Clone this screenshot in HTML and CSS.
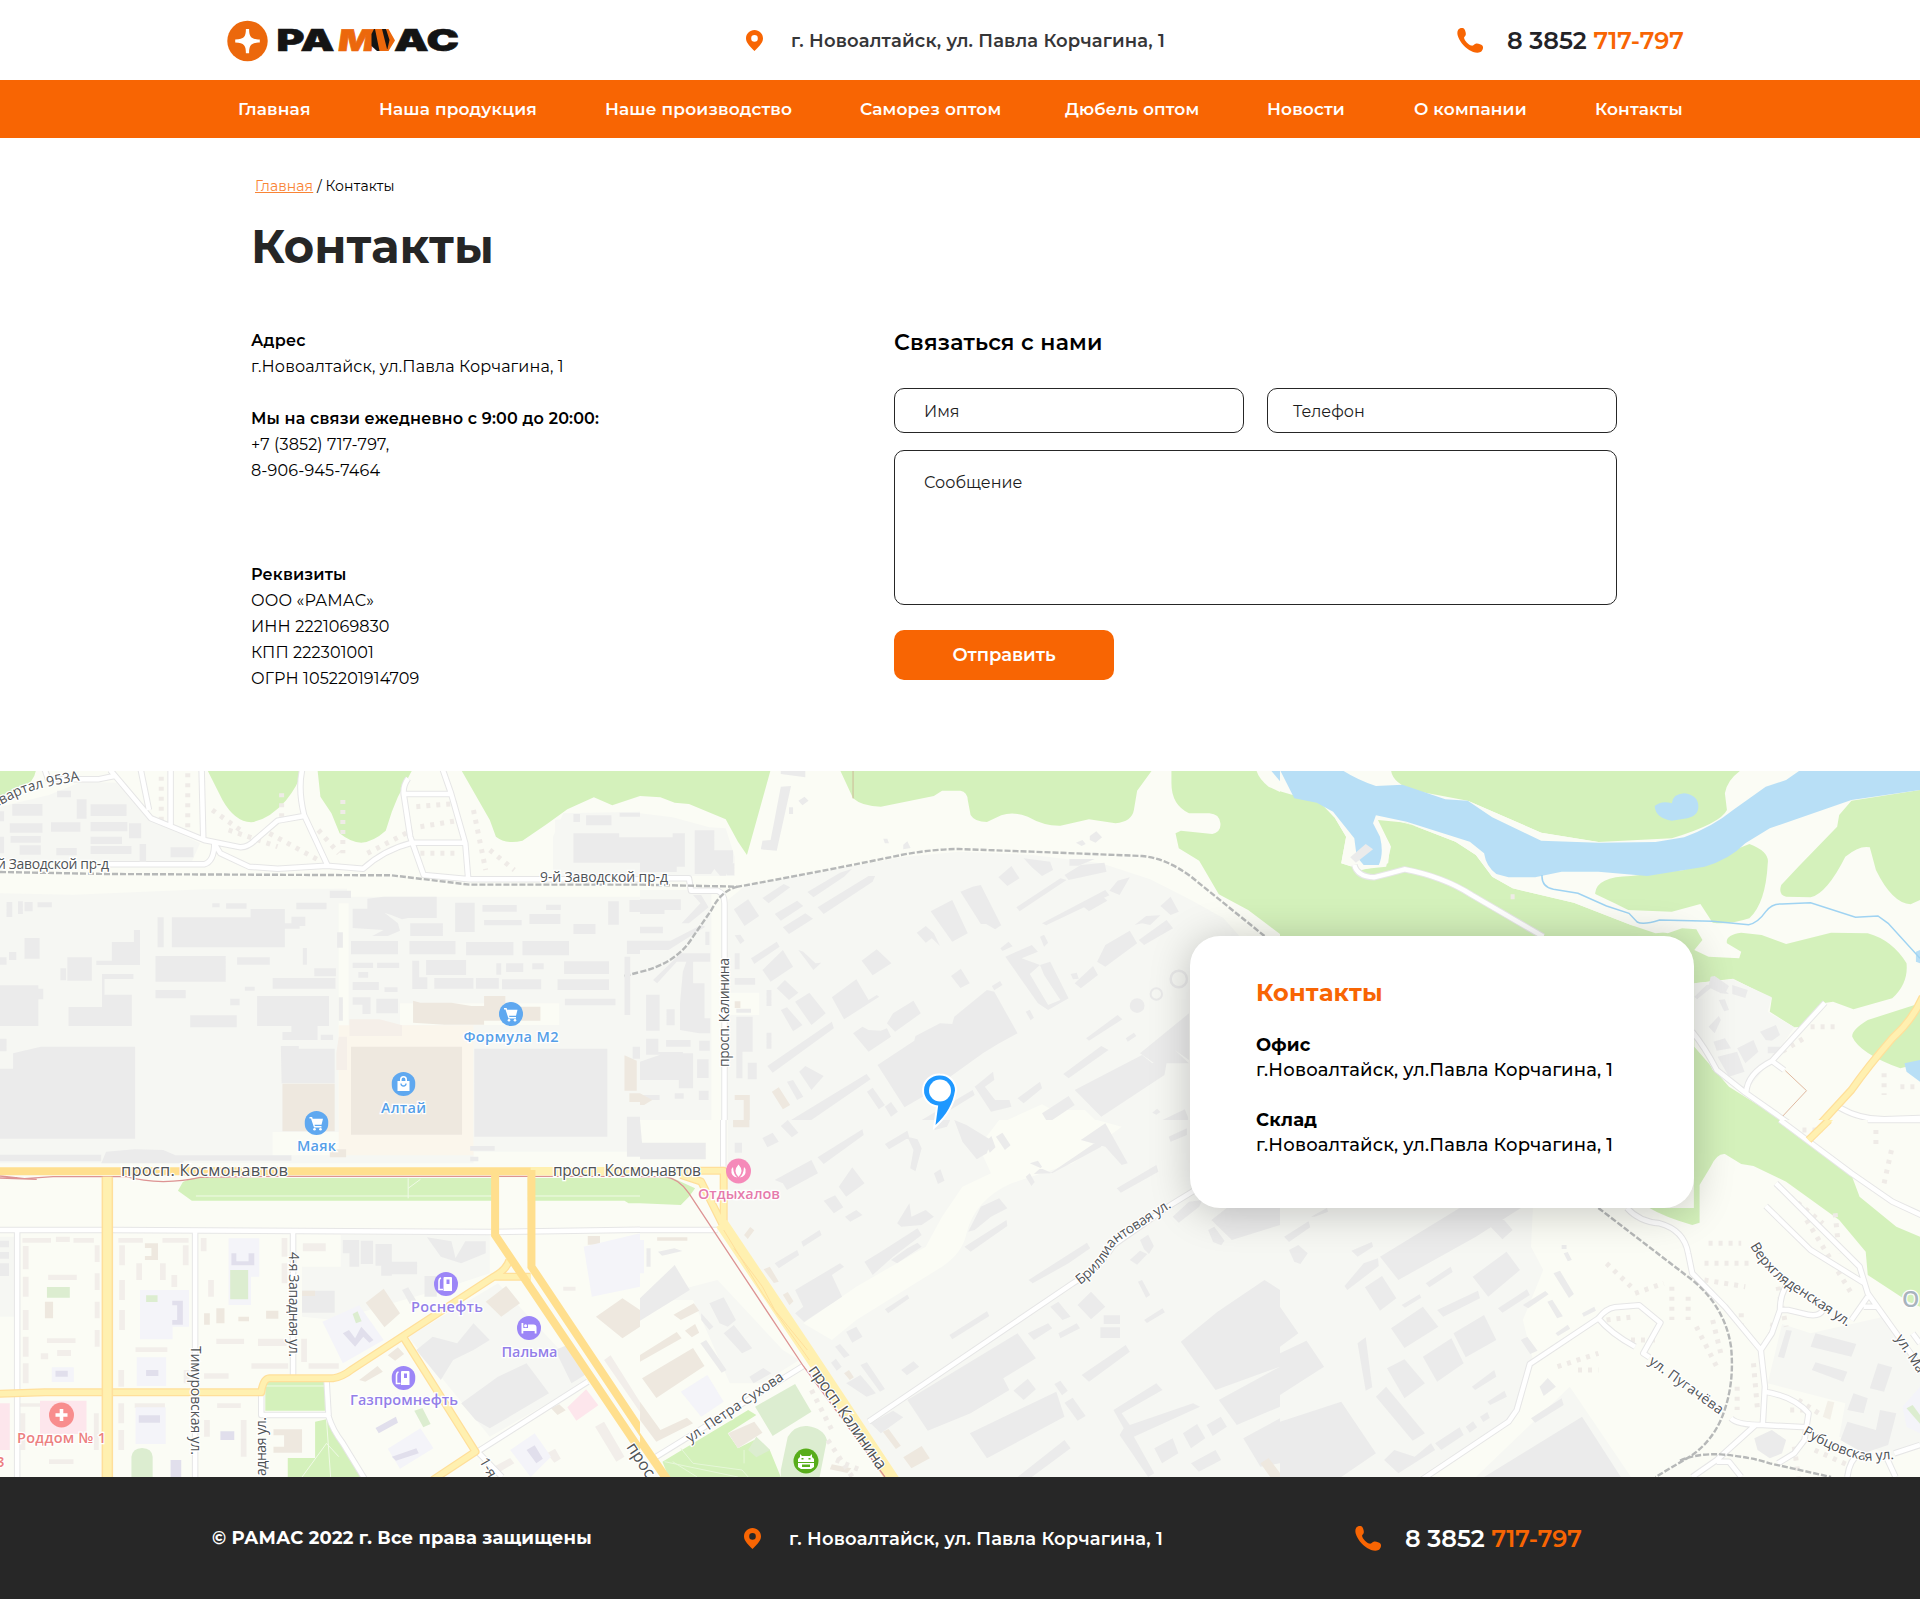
FILE: index.html
```html
<!DOCTYPE html>
<html lang="ru">
<head>
<meta charset="utf-8">
<title>Контакты — РАМАС</title>
<link rel="stylesheet" href="styles.css">
</head>
<body>
<svg class="sprite" width="0" height="0">
  <symbol id="i-pin" viewBox="0 0 17 21"><path fill-rule="evenodd" d="M8.5 0C3.8 0 0 3.7 0 8.4 0 13 5.2 17.400 8.500 21 11.800 17.400 17 13 17 8.400 17 3.700 13.200 0 8.500 0Zm0 5.100a3.300 3.300 0 1 1 0 6.600 3.300 3.300 0 0 1 0-6.600Z"/></symbol>
  <symbol id="i-phone" viewBox="0 0 26 25"><path d="M1.200 1.800C2.700-.4 6.500-.6 7.600 1.500c.9 1.700 1.500 3.900 1.100 5.400-.3 1.300-1.800 1.700-1.600 3 .4 2.600 4.300 6.700 7.300 7.700 1.700.5 2.500-1.300 4.200-1.900 2-.7 5.400.5 6.700 1.900 1.600 1.800.3 5.200-1.900 6.500-3 1.700-7.800.2-11.300-2.100C6.600 18.300 2.300 13.200.700 7.600.200 5.800.100 3.400 1.200 1.800Z"/></symbol>
  <symbol id="m-cart" viewBox="-12 -12 24 24"><circle r="12" fill="#5fa8f0"/><path fill="#fff" d="M-7-6h2.600l.6 1.800H6.500L5 1.800h-7l.4 1.300H5v1.500h-7.500L-5.500-4.500H-7Z"/><circle cx="-2" cy="6.300" r="1.300" fill="#fff"/><circle cx="4" cy="6.300" r="1.300" fill="#fff"/></symbol>
  <symbol id="m-bag" viewBox="-12 -12 24 24"><circle r="12" fill="#5fa8f0"/><path d="M-6-3H6V7H-6Z" fill="#fff"/><path d="M-2.700-3v-1.500a2.700 2.700 0 0 1 5.400 0V-3" fill="none" stroke="#fff" stroke-width="1.600"/><path d="M-2.500-.5a2.500 2.500 0 0 0 5 0" fill="none" stroke="#5fa8f0" stroke-width="1.300"/></symbol>
  <symbol id="m-fuel" viewBox="-12 -12 24 24"><circle r="12" fill="#9c86f7"/><path fill-rule="evenodd" fill="#fff" d="M-1.500-7H5Q6-7 6-6V7H-2.500V-6Q-2.500-7-1.500-7ZM.500-4.500V0h3v-4.500Z"/><path d="M-3 5.500H-7V-2.500q0-3 2-3.500" fill="none" stroke="#fff" stroke-width="1.600"/></symbol>
  <symbol id="m-bed" viewBox="-12 -12 24 24"><circle r="12" fill="#9c86f7"/><path fill="#fff" d="M-7.500-5h1.800v5H-1v-3.500h5.500Q7.500-3.500 7.500-.5V5.500H5.700V3h-11.400v2.500h-1.800Z"/><circle cx="-3.400" cy="-2.200" r="1.500" fill="#fff"/></symbol>
</svg>

<header class="topbar">
  <a class="logo" href="#" aria-label="РАМАС">
    <svg width="236" height="44" viewBox="224 18 236 44">
      <circle cx="247.500" cy="41" r="20.200" fill="#ec680c"/>
      <path fill="#fff" d="M245.900 28.900h3.200c0 7 1.400 10.500 10.700 10.500v3c-9.300 0-10.700 3.500-10.700 10.800h-3.200c0-7.300-1.400-10.800-10.700-10.800v-3c9.300 0 10.700-3.500 10.700-10.500Z"/>
      <text class="logo__text" x="276.500" y="51" textLength="58" lengthAdjust="spacingAndGlyphs">РА</text>
      <text class="logo__text logo__text--accent" transform="translate(337 51) skewX(-8)" textLength="36" lengthAdjust="spacingAndGlyphs">М</text>
      <path fill="#141414" d="M371.500 34L374 29H386L390 34V47L386 51H377L371.500 46Z"/>
      <path fill="#ec680c" d="M375 29H382L387.500 51H379.500ZM386 29H388.500L395 40.500 388.500 51H387L389.500 40Z"/>
      <text class="logo__text" x="394" y="51" textLength="65" lengthAdjust="spacingAndGlyphs">АС</text>
    </svg>
  </a>
  <div class="place"><svg class="ico-pin"><use href="#i-pin"/></svg><span>г. Новоалтайск, ул. Павла Корчагина, 1</span></div>
  <a class="tel" href="#"><svg class="ico-phone"><use href="#i-phone"/></svg><span>8 3852 <b>717-797</b></span></a>
</header>

<nav class="menu">
  <a href="#">Главная</a><a href="#">Наша продукция</a><a href="#">Наше производство</a><a href="#">Саморез оптом</a><a href="#">Дюбель оптом</a><a href="#">Новости</a><a href="#">О компании</a><a href="#">Контакты</a>
</nav>

<main class="page">
  <div class="crumbs"><a href="#">Главная</a> / Контакты</div>
  <h1 class="title">Контакты</h1>
  <div class="cols">
    <div class="info">
      <section>
        <h2>Адрес</h2>
        <p>г.Новоалтайск, ул.Павла Корчагина, 1</p>
      </section>
      <section>
        <h2>Мы на связи ежедневно с 9:00 до 20:00:</h2>
        <p>+7 (3852) 717-797,</p>
        <p>8-906-945-7464</p>
      </section>
      <section class="info__legal">
        <h2>Реквизиты</h2>
        <p>ООО «РАМАС»</p>
        <p>ИНН 2221069830</p>
        <p>КПП 222301001</p>
        <p>ОГРН 1052201914709</p>
      </section>
    </div>
    <form class="form">
      <h2>Связаться с нами</h2>
      <div class="form__row"><label class="field">Имя</label><label class="field field--tel">Телефон</label></div>
      <label class="field field--area">Сообщение</label>
      <button class="btn" type="button">Отправить</button>
    </form>
  </div>
</main>

<section class="mapwrap">
<svg class="map" viewBox="0 771 1920 706">
  <defs>
    <path id="lp1" d="M-5 808L18 796Q38 787 84 780"/>
    <path id="lp2" d="M1080 1285Q1100 1270 1108 1256 1114 1243 1124 1238L1178 1203"/>
    <path id="lp3" d="M1750 1246Q1768 1278 1800 1295L1852 1330"/>
    <path id="lp4" d="M1802 1434Q1840 1457 1868 1461L1905 1458"/>
  </defs>
  <rect y="770" width="1920" height="708" fill="#fbfcf5"/>

  <!-- north-west -->
  <svg x="0" y="770" width="640" height="350" viewBox="0 0 1568 1050" preserveAspectRatio="none">
    <path class="ind" d="M0 110L120 75 200 35 285 38 370 150 490 220 470 275H0ZM0 370L180 374 500 358 850 356V380H1568V1050H0ZM1355 200L1380 130 1568 125V330H1355Z"/>
    <path class="ind" d="M1568 125V330H1360V150Z"/>
    <path class="land" d="M830 400H854V1050H830ZM980 700H1370V765H980Z"/>
    <path class="green" d="M0 0H88Q85 35 50 60 25 76 0 78ZM508 0L545 90Q575 155 615 157 660 148 700 92 732 45 740 0ZM778 0L785 80 812 130 832 190Q860 218 885 218 915 215 945 182L960 125 975 80 1010 0ZM1130 0L1200 150 1215 200Q1240 224 1280 212L1340 162 1390 118 1455 82 1500 106 1568 78V0Z"/>
    <path class="tiny" d="M395 20V150M460 10V180M520 120L600 190M690 70V140M660 190L780 270M780 180L830 250M840 90V250M900 250L1010 180M1020 110L1120 100M1030 250L1120 250M1160 120L1190 300M1200 240L1260 300M1030 170L1130 150M560 180L680 230"/>
    <g id="ra">
      <path d="M110 0L118 28H240L280 18M270 0L370 145 500 210 590 232Q610 230 625 210L680 152 745 138M345 0L365 120M418 0V170M494 0L498 205M740 0Q730 60 745 135L802 285M250 283H500Q525 275 525 220L540 250 610 290 680 296 800 287 890 296Q940 240 1010 218H1140M1000 25Q985 50 990 80L1005 200 1038 315 1150 328H1568M1085 0L1105 70 1140 220 1147 325M990 72H1105"/>
    </g>
    <use href="#ra" class="case"/><use href="#ra" class="road"/>
    <path class="rail" d="M0 306L260 312 960 316 1150 344H1568M1530 618L1568 606"/>
    <path class="bld" d="M30 102h74v35h-74ZM24 160h80v28h-80ZM26 198h74v20h-74ZM48 226h52v28h-52ZM125 157h72v28h-72ZM188 88h24v58h-24ZM222 103h88v35h-88ZM222 156h90v28h-90ZM222 200h77v22h-77ZM222 228h100v24h-100ZM316 160h30v45h-30ZM342 222h16v54h-16ZM140 62h34v20h-34ZM138 234h50v22h-50ZM0 124h10v30h-10ZM0 200h10v50h-10ZM418 232h56v30h-56Z
      M16 396h14v45h-14ZM44 394h12v38h-12ZM60 396h20v28h-20ZM92 397h35v15h-35ZM520 400h18v12h-18ZM554 400h50v16h-50ZM726 398h74v20h-74ZM808 362h52v22h-52ZM386 442h15v90h-15ZM421 442H614V417H698V532H421ZM714 440h34v28h-34ZM698 460h36v16h-36ZM60 504h37v62h-37ZM274 516H328V480H343V585H236V572H274ZM165 562H225V632H165ZM148 595h14v36h-14ZM250 612H327V627H256V674H323V768H168V711H250ZM381 558h172v77h-172ZM381 660h74v25h-74ZM581 562h80v22h-80ZM742 534h10v50h-10ZM770 595h53v24h-53ZM668 624h154v32h-154ZM600 650h24v12h-24ZM564 686h23v20h-23ZM630 678h176v90h-28v42h-86v-24h22v-18h-84ZM786 794h30v16h-30ZM826 487h14v46h-14ZM830 682h10v70h-10ZM466 736h114v36h-114ZM0 646h94v10h12v32h-12v80h-94ZM0 806h16v38h-16ZM22 546h18v24h-18ZM0 562h16v22h-16Z
      M1405 190h112v12h51v76h-163ZM1436 136h62v30h-62ZM1405 132h16v24h-16ZM1518 128h50v12h-50ZM864 416H900V386L940 380H1070V444H1000L985 448 960 436 942 428 975 460 980 482 950 498H912L940 480 864 474ZM1005 460h80v38h-80ZM1115 398h48v88h-48ZM1182 405h84v20h-84ZM1186 450h92v16h-92ZM1297 432h76v30h-76ZM1338 404h36v16h-36ZM1405 462h54v30h-54ZM1490 394h26v70h-26ZM1542 390h26v36h-26ZM860 513h115v40h-115ZM1003 513h113v40h-113ZM1142 516h116v40h-116ZM1280 513h114v43h-114ZM1536 512h32v40h-32ZM864 578h50v16h-50ZM924 578h54v16h-54ZM878 606h24v17h-24ZM864 636h64v24h-64ZM942 652h32v14h-32ZM1010 572h17v50h20v35h-37ZM1044 570h98v45h-98ZM1064 624h96v32h-96ZM1166 624h56v32h-56ZM1230 628h96v30h-96ZM1366 628h126v32h-126ZM1382 574h110v38h-110ZM1240 580h42v26h-42ZM1304 580h28v18h-28ZM1216 580h12v34h-12ZM1384 686h124v20h-124ZM864 682h44v50h-20v-28h-24ZM922 686h53v44h-53ZM1530 560h14v175h-14ZM688 828h44v8h88v104h-130ZM32 850l68-20h231v220h-331v-154h32ZM1162 836h326v214h-326ZM1550 830h18v36h-18ZM1536 1040h32v10h-32Z"/>
    <path class="shop" d="M830 766H1160V1050H830Z"/>
    <path class="beige" d="M1012 692L1030 698H1106L1155 708H1186V678H1238V710H1324V752H1186V764H1090L1012 758ZM860 830H1132V1050H860ZM692 941H820V1050H692ZM1530 856l30 16v90h-30ZM1542 970h26v26h-26Z"/>
    <path fill="#f5efe9" d="M856 748H930L985 766V798H856ZM830 800H850V900H824V850Z"/>
  </svg>

  <!-- north -->
  <svg x="640" y="770" width="640" height="350" viewBox="0 0 1568 1050" preserveAspectRatio="none">
    <path class="ind" d="M0 130L80 142 170 172 210 175 232 260V318H0ZM0 360H175V1050H0ZM215 390L260 345 640 262 780 245 960 255 1130 280 1250 328 1350 390 1430 445 1470 500H1568V1050H215Z"/>
    <path class="land" d="M215 668H292V735H215ZM900 1050L985 1003 1010 1020 1090 1020 1115 1050Z"/>
    <path class="green" d="M0 0H320L262 255 240 215 210 148 120 102 85 98 50 82 0 78ZM490 0L522 85Q545 110 590 110L720 78 740 62H785Q802 66 803 90L810 135Q820 156 850 156L885 136Q915 124 950 140 990 168 1030 167L1100 148 1165 160Q1205 155 1210 120L1218 62 1255 0ZM1302 0H1568V492L1490 420 1418 373 1370 272 1320 235 1312 190 1325 182 1402 192Q1424 185 1422 160 1420 132 1395 130H1345Q1302 105 1302 40Z"/>
    <path class="land" d="M1510 0H1568V66L1540 50Q1515 25 1510 0Z"/>
    <path class="water" d="M1545 0H1568V34Z"/>
    <path d="M522 0V85" stroke="#cdbb97" stroke-width="1" fill="none"/>
    <path class="bld" d="M345 50L370 48 335 242 296 238 300 212 320 210ZM345 0H405V22L345 12ZM388 92l15-12 10 12-15 14ZM1102 198l16-14 14 18-16 16-14-8ZM1068 218l16-8 8 12-10 6ZM645 224l10-10 8 20-18 4ZM596 206l10 0 4 14-10 0ZM365 112h10v20h-10ZM0 202H80V190H110V290H90V306H0ZM134 181h48v60h46v36l-18 40h-14l-14 -20 -8 15h-40ZM213 280h18v36h-18Z
      M230 418L265 388 292 438 256 468ZM300 384L352 342 368 352 315 400ZM410 366L490 308 520 296 500 320 425 382ZM435 412L560 318 576 318 570 335 450 432ZM330 432L385 392 400 408 345 452ZM350 472L405 430 424 446 365 492ZM712 424L765 390 803 490 765 515ZM785 365L815 350 835 345 885 466 870 478 848 462 835 462ZM678 488L700 468 720 490 735 528 715 505 700 518ZM878 322L910 288 930 325 900 348ZM940 265L1005 275 1012 300 985 318 960 292ZM1040 315L1080 285 1138 278 1143 305 1050 330ZM1052 267h62l-40 20h-22ZM922 412L1030 325 1045 330 930 424ZM985 460L1140 360 1150 376 995 466ZM1088 412L1130 376 1145 392 1100 424ZM1150 362L1170 332 1200 322 1175 375ZM1275 408L1300 380 1320 425 1300 435ZM1212 465L1240 438 1275 436 1250 465 1230 460ZM1222 510L1290 450 1306 475 1235 525ZM1120 575L1140 525 1200 482 1218 520 1140 590ZM543 572L580 538 616 580 570 616ZM762 618L786 596 808 640 785 654ZM470 682L530 628 560 690 580 675 586 680 500 748ZM582 885L672 812 675 798 735 760 765 762 770 740 850 660 868 665 925 790 880 820 840 850 760 920 700 975 648 1012ZM605 760L620 730 670 692 688 730 625 785ZM522 790L545 770 560 780 590 782 605 775 615 800 560 845ZM272 565L335 515 342 530 280 582ZM300 600L350 540 375 590 320 635ZM388 540L400 545 430 580 444 578 425 600ZM335 655L355 630 388 668 365 690ZM380 695L415 668 455 730 420 765ZM345 720L360 712 398 765 375 784ZM312 888L470 755 475 775 325 908ZM370 1050L555 912 565 928 420 1050ZM390 905L405 888 450 918 420 960ZM360 935L375 930 400 980 385 990ZM556 965L570 953 600 1005 585 1018ZM600 1010L615 996 632 1025 615 1040ZM895 560L960 525 975 545 935 565 980 585 955 612 1000 705 1030 690 990 615 980 585 1005 575 1050 685 1000 720 975 700ZM883 535l20-20 10 14-25 14ZM980 500l10-6 10 24-10 12ZM1065 640L1110 588 1122 615 1080 655ZM1055 612l15-4 5 18-14 2ZM862 648l20-15 6 12-20 16ZM945 725l10-6 10 24-8 8ZM1093 805L1170 735 1182 748 1100 812ZM1037 912L1130 828 1148 840 1050 925ZM1065 960L1230 855 1255 880 1275 850 1310 840 1345 880H1290L1285 915 1130 1040ZM1190 805L1210 788 1216 798 1195 815ZM1225 850L1345 730V870L1310 840 1275 850 1260 880ZM820 950L865 905 868 930 845 950 870 990 905 990 910 1010 860 1025ZM925 985L980 935 985 955 940 1000ZM985 1030L1050 978 1065 1005 1010 1050H995ZM1255 1028l12-12 8 10-10 8ZM1280 1050l55-32 8 25v7ZM690 1050l125-90 5 15-100 75Z
      M0 388H100V420H60V432H0ZM102 460L148 400 130 375H150L168 412 120 460ZM0 470h56v20h-56ZM0 512H75L150 465 160 470 70 540H0ZM32 630L100 550H172V575H90L42 640ZM160 485h10v40h-10ZM105 605L115 570H130V640H158V745H172V790H145L98 780V700ZM15 674h33v108h-33ZM65 718h20v48h-20ZM15 806h30v40h60v8h-90ZM64 810h60v20h-60ZM145 812h26v30h-26ZM0 875L60 850H130V955H95V930H0ZM140 868h28v56h-28ZM8 975h40v15h-40ZM85 970h22v16h-22ZM144 962h24v28h-24ZM232 550h12v48h-12ZM232 624h50v20h-50ZM232 496l14-2 10 18-10 10ZM236 740h40v105h-25v80h-15ZM264 878h22v50h-22ZM310 660h12v48h-12ZM310 788h12v48h-12ZM236 716h36v12h-36Z"/>
    <ellipse cx="1218" cy="707" rx="18" ry="22" class="bld"/>
    <ellipse cx="1265" cy="672" rx="14" ry="17" fill="none" stroke="#e9e9e9" stroke-width="2"/>
    <ellipse cx="1320" cy="627" rx="20" ry="25" fill="none" stroke="#e9e9e9" stroke-width="2.500"/>
    <path class="beige" d="M232 694h14v20h-14ZM323 965L340 952 368 1005 350 1018ZM232 975H269V1072H228V1052H254V990H232ZM0 970l30 20-20 15-10 0Z"/>
    <g id="rb"><path d="M60 325H120L125 362H190Q207 370 207 400V1060"/></g>
    <use href="#rb" class="case"/><use href="#rb" class="road"/>
    <path class="rail" d="M0 344L240 350Q480 296 640 255 710 238 780 237L960 245 1230 258Q1290 265 1350 320L1530 498M240 350Q200 360 175 420L130 500Q90 580 0 606"/>
  </svg>

  <!-- north-east -->
  <svg x="1280" y="770" width="640" height="350" viewBox="0 0 1568 1050" preserveAspectRatio="none">
    <path class="green" d="M0 64L100 100 135 145 162 200 150 280 200 300 235 290 265 280 270 225 240 150 310 158 430 215 480 255 520 320 570 355 720 398 860 465 950 490 985 475 1020 478 1035 510 1015 540 1050 560 1125 565 1130 545 1095 520Q1090 495 1130 488L1180 495 1240 522 1350 488 1440 490Q1500 510 1535 580 1540 640 1500 685L1405 718 1355 695 1330 700 1285 770 1260 772 1200 725 1205 685 1110 626 1015 640V830L1100 950 1230 1050H0ZM272 0Q275 40 330 62L460 92 640 188 780 216 960 205Q1080 160 1095 120L1090 70Q1095 30 1130 0ZM1568 60L1400 92 1370 135 1365 170 1270 290 1228 345Q1220 375 1240 380L1300 382Q1340 370 1385 260 1420 225 1445 232L1460 300Q1500 400 1545 403L1568 390ZM1150 222Q1200 245 1195 280 1190 400 1150 445 1100 465 1060 458L1030 402 960 425 850 420Q775 400 772 370 775 320 860 318L990 300ZM1568 700L1440 750Q1400 780 1402 800 1420 850 1520 895L1568 880Z"/>
    <path class="ind" d="M1015 640L1110 628 1205 682 1195 725 1260 772 1205 870 1140 965 1060 900 1015 790Z"/>
    <path class="land" d="M135 145L162 200 150 280 200 298 260 290 272 230 235 150 240 135 180 130ZM240 138L310 158 430 215 480 255 520 320 570 355 720 398 860 465 920 490 960 485 820 400 700 330 520 310 500 250 400 190ZM460 92L640 188 780 216 780 222 640 215 520 150Z"/>
    <path class="water" d="M0 0H152Q190 30 235 48L300 44 405 88 460 92 520 142 640 212 780 218 920 216 990 202Q1060 170 1110 120L1190 50 1240 30 1275 0H1568V60L1400 90 1200 175 1140 220Q1100 270 1040 290L900 318 780 305H690L625 322H560L530 312Q505 290 500 250L465 215 310 155 235 136 228 160 245 200Q255 250 242 285H205L188 260 182 205 130 125 90 98 35 85ZM960 100Q962 72 990 70 1025 75 1025 110 1025 140 990 146L960 152Q920 145 918 108 935 90 960 100ZM1568 540L1558 545V575L1568 580ZM1568 870L1530 880 1535 905 1568 935Z"/>
    <path d="M642 315Q640 350 670 358L730 370 800 408 855 430 875 456Q890 466 930 450L1060 454 1148 464Q1170 460 1190 425 1205 400 1230 402L1300 398 1410 442 1465 438 1490 460 1568 565" fill="none" stroke="#9fd3f2" stroke-width="1.500"/>
    <path class="bld" d="M172 262L210 222 228 238 186 278ZM1015 680L1045 645 1070 640 1100 672 1080 670 1055 655 1022 688ZM1055 620l10-2 35 30-10 24-40-25ZM1108 645L1146 660 1140 684 1108 672ZM1075 690L1090 688 1100 720 1088 724ZM1050 770L1075 738 1080 750 1065 790ZM1062 815L1090 805 1105 835 1070 842ZM1072 860L1120 845 1138 905 1100 920ZM1120 835L1160 810 1172 845 1140 880ZM1176 785L1215 765 1225 795 1205 812 1190 810ZM1195 830h30v20h-30Z"/>
    <path class="tiny" d="M1300 770L1360 770M1210 860L1290 800M1480 910V975M1520 950h48M565 380h16"/>
    <g id="rc"><path d="M182 285Q190 320 230 322 270 310 305 298 400 320 470 375L645 500M1335 698L1205 873Q1145 910 1142 968M1205 873L1235 900M1010 785Q1040 830 1070 900L1140 968 1270 1080M1370 1012Q1420 1048 1480 1048L1568 1044"/></g>
    <use href="#rc" class="case"/><use href="#rc" class="road"/>
    <path d="M1238 902L1290 962 1232 1038" fill="none" stroke="#e0b9a0" stroke-width="1"/>
    <g id="rd"><path d="M1575 680Q1550 750 1500 805 1440 890 1400 960L1310 1080"/></g>
    <use href="#rd" class="ycase"/><use href="#rd" class="yroad"/>
  </svg>

  <!-- south-west -->
  <svg x="0" y="1120" width="640" height="357" viewBox="0 0 1568 1071" preserveAspectRatio="none">
    <path class="ind" d="M0 0H1568V95H1160V130H0ZM835 345H1200V460L1100 500 820 600 740 590V440H835ZM1000 650L1220 490 1440 780 1200 950ZM0 350H36V590H0Z"/>
    <path class="land" d="M668 36H832V106H668Z"/>
    <path class="shop" d="M830 0H1160V106H830Z"/>
    <path class="bld" d="M0 0H331V56H0ZM1162 0H1488V50H1162ZM1536 0H1568V110H1536ZM248 130L260 95 330 88 400 90 430 106H714V122H450V130ZM1152 78h60v14h-60ZM1152 110h20v14h-20ZM0 104h248v20h-248Z
      M840 360h40v80h-24v-40h-16ZM884 362h30v70h-30ZM920 372h40v95h-26v-30h-14ZM960 425h62v38h-62ZM1046 352l60 12 10 50 24-50h50v36l-60 30-50-20ZM740 512h80v66h-80ZM1040 468h30v62h-30ZM985 510l15-8 20 40-16 10ZM1020 690L1060 650 1120 670 1140 640 1160 610 1200 660 1160 690 1110 720 1080 780ZM1130 850L1220 770 1290 730 1345 820 1200 925 1165 900ZM1360 690L1390 675 1440 760 1400 790ZM0 362h22v20h-22ZM0 396h22v20h-22ZM0 430h22v38h-22Z"/>
    <path class="beige" d="M692 0h128v34h-128ZM860 0h272v44h-272ZM808 88h40v24h-40ZM355 370h32v50h-32v-12h16v-24h-16ZM110 545h20v50h-20ZM740 512h32v16h-32ZM500 580h14v34h-14ZM530 565h20v45h-20ZM652 572h30v24h-30ZM584 590h26v14h-26ZM896 548L940 506 980 580 942 622ZM1190 545L1240 498 1274 550 1228 590ZM950 706L975 682 990 702 968 722ZM880 780L925 738 938 755 895 785ZM670 928h70v70h-70v-18h26v-34h-26ZM1460 590L1525 535 1568 570V620L1525 655ZM1440 348h30v26h-30ZM1350 865l20-12 16 18-20 14Z"/>
    <path class="flat" d="M55 354h70v14h-70ZM137 350h34v16h-34ZM180 354h50v14h-50ZM56 378h14v70h-14ZM56 470h14v60h-14ZM56 570h14v60h-14ZM56 650h14v60h-14ZM56 730h14v60h-14ZM118 464h70v16h-70ZM232 376h12v50h-12ZM232 460h12v50h-12ZM232 545h12v50h-12ZM232 630h12v50h-12ZM115 655h70v14h-70ZM100 700h18v18h-18ZM140 690h34v18h-34ZM290 354h60v14h-60ZM398 354h64v14h-64ZM292 376h14v60h-14ZM334 430h14v50h-14ZM292 480h14v60h-14ZM392 430h14v50h-14ZM448 376h14v60h-14ZM420 465h14v36h-14ZM292 570h14v60h-14ZM332 682h78v14h-78ZM290 750h14v50h-14ZM450 750h14v40h-14ZM492 354h14v40h-14ZM510 480h14v50h-14ZM690 354h14v56h-14ZM742 370h56v24h-56ZM690 430h14v60h-14ZM632 656h70v22h-70ZM738 656h14v70h-14ZM616 730h90v16h-90ZM756 730h74v16h-74ZM530 656h68v16h-68ZM500 760h60v16h-60ZM290 850h14v60h-14ZM330 850h74v14h-74ZM532 850h58v14h-58ZM40 850h60v10h-60ZM50 880h12v110h-12ZM230 880h12v110h-12ZM290 930h14v60h-14ZM120 1018h60v14h-60ZM500 900h14v50h-14ZM590 900h14v110h-14ZM1458 920L1480 905 1530 1010 1510 1025ZM1480 720l16-14 72 140v30ZM1210 1040l40-26 10 16-36 26ZM1380 500h30v12h-30ZM1340 1000l20-14 14 30-16 12Z"/>
    <path class="plot" d="M560 355h75v115h-20v85h-55ZM343 510h120v110h-40v38h-80ZM790 605L880 556 940 660 840 730ZM335 712h72v86h-72ZM332 862h74v110h-74ZM127 742h54v44h-54ZM950 986L1030 925 1062 985 980 1046ZM1430 380L1568 340V500L1450 530ZM1250 990L1310 940 1350 1010 1300 1071Z"/>
    <path class="lilac" d="M567 400h12v24h30v-24h14v36h-56ZM422 542h26v72h-26v-14h12v-44h-12ZM840 640L855 630 870 655 885 620 915 660 905 668 890 650 870 680ZM358 750h30v18h-30ZM340 886h52v22h-52ZM136 752h30v18h-30ZM540 934h34v26h-34ZM920 924L970 890 975 908 928 940ZM960 1010L1020 985 1026 1000 970 1022ZM418 1020h26v51h-26ZM1290 990l20-14 20 40-16 14Z"/>
    <path class="park" d="M564 450h44v88h-44ZM115 501h56v32h-56ZM358 526h28v20h-28ZM322 1071V1010Q325 985 348 984 372 985 374 1010V1071ZM1015 872l20-8 20 48-18 10ZM864 582l12-8 10 30-14 6Z"/>
    <path class="green" d="M470 174H1568V250H1540L1530 242H470L436 212 448 186ZM650 785H796V872H650ZM772 905L800 898 895 1071H705V1014H772Z"/>
    <path fill="#fde6ec" d="M98 842h114v100h-114ZM0 850h24v140h-24ZM1390 862L1436 808 1466 856 1412 902Z"/>
    <path d="M480 228H1568M1000 175V235M1000 205L1030 178M650 798H796M740 1071L800 970 830 1010M800 900L810 1071" fill="none" stroke="#f0fae6" stroke-width="1"/>
    <path class="land" d="M1222 170H1293V326H1222Z"/>
    <g id="re"><path d="M0 330H275L1200 336 1568 329M42 335V1071M478 338V1071M718 338V770M640 820V885H805L800 780M805 890Q815 930 840 970L895 1080M1170 995L1440 785M1170 995L1230 1071"/></g>
    <use href="#re" class="case"/><use href="#re" class="road"/>
    <path class="tram" d="M0 168L60 176 130 170H310Q350 184 400 185 450 183 490 172L700 169H1568M0 174L90 178"/>
    <g id="rf"><path d="M-10 822L110 817H640Q645 776 660 775H815Q840 770 860 750L1210 470H1300M1210 470Q1240 450 1248 420M990 655L1165 995 1060 1080"/></g>
    <use href="#rf" class="ycase"/><use href="#rf" class="yroad"/>
    <g id="rg"><path d="M263 170V1080"/></g>
    <use href="#rg" class="ycase w10"/><use href="#rg" class="yroad w9"/>
    <path class="oroad" d="M-10 154H1310"/>
    <path class="yroad w9" d="M1300 154H1580"/>
    <path class="oroad w8" d="M1213 165V345L1568 990M1302 150V440L1580 950"/>
  </svg>

  <!-- south -->
  <svg x="640" y="1120" width="640" height="357" viewBox="0 0 1568 1071" preserveAspectRatio="none">
    <path class="ind" d="M0 0H1568V1071H620L200 320 215 180V0ZM0 540L190 480 350 690 390 720 300 790H220L130 540Z"/>
    <path class="land" d="M880 0H1120L1180 20 1060 130 910 190Q820 240 800 340 790 400 740 440L530 600 470 660 400 610 530 500 700 380 740 290 790 200 860 160 830 80Z"/>
    <path class="bld" d="M0 0L5 68H161V118H0ZM232 68h18v30h-18ZM435 112L545 28 548 45 450 132ZM300 54L325 38 340 65 312 82ZM345 18L362 0 388 38 372 52ZM330 180L420 120 436 160 360 210 350 190ZM450 242L478 226 498 262 475 280ZM487 200L520 142 550 190 505 230ZM502 290L530 270 545 285 515 305ZM600 72L655 32 660 52 610 88ZM662 145L670 90 655 50 680 58 690 85 675 154ZM720 0h40l-8 20-30 10ZM770 0L800 15 860 60 850 100 825 118 790 65ZM845 68l16-20 10 34-14 16ZM872 50l16-12 20 38-14 14ZM720 160l16-12 10 34-16 10ZM630 310L660 250 665 290 700 270 720 290 690 315 640 320ZM804 335L835 260 880 235 900 265 860 290 820 330ZM795 380L898 300 900 318 810 395ZM550 425L590 395 680 325 690 345 620 410 570 465ZM655 385L680 368 690 380 630 430 615 420ZM330 430L385 390 390 405 340 445ZM395 365L440 330 445 345 400 380ZM380 510L490 430 500 440 470 465 495 530 402 606 380 580 400 560ZM505 635L530 620 545 650 520 668ZM478 680l12-8 24 34-14 8ZM600 568L655 524 660 535 608 580ZM758 645L850 574 856 588 765 658ZM952 480L1095 368 1103 385 1050 430 962 490ZM1168 205L1265 135 1270 155 1178 218ZM945 170l10-10 12 26-8 12ZM955 130L975 122 985 140 965 162 1005 160 1125 60 1130 80 1010 160ZM1080 60L1140 10 1195 130 1180 135 1140 80ZM1295 50L1340 25V45L1300 65ZM1020 580L1005 560 1025 545 1055 590 1035 600ZM1072 555L1105 515 1140 560 1105 598ZM1136 586h40v26h-40ZM1128 622h48v32h-48ZM1220 485l10-5 20 45-10 8ZM1235 600l45-35 6 12-44 32ZM1200 420l25-28 18 10-25 32ZM1225 360l20-16 14 34-12 24-12-14ZM1305 290L1345 245 1378 240 1370 260 1320 308ZM1392 330l15-10 25 42-8 14-20-10ZM1400 300L1440 262H1568V315L1450 360ZM655 840L850 695 925 640 970 715 890 775 905 810 810 880 705 932ZM808 940L1020 815 1040 890 850 1015ZM915 812L950 776 970 808 940 840ZM1040 848l20-15 32 55-20 14ZM1015 792l15-10 18 30-14 14ZM1082 765L1190 675 1200 695 1100 785ZM1025 640L1070 610 1078 625 1030 655ZM950 640L1000 610 1010 625 965 660ZM1325 665L1415 575 1530 480 1568 510V740L1410 810ZM1418 840L1568 740V860L1462 915ZM1478 955L1530 920 1568 895V1030L1520 1040ZM1160 870L1265 790 1280 810 1180 880 1200 915 1355 850 1372 860 1210 950 1260 1060 1245 1071 1175 945 1185 925ZM1330 940L1365 912 1385 955 1350 985ZM1388 915l35-25 15 30-35 28ZM1260 985l45-30 14 45-40 30ZM1350 1030l60-40 14 30-55 35ZM925 1071L1040 960 1055 985 960 1071ZM565 910L620 872 645 892 590 940ZM505 790L540 765 578 820 555 830ZM540 735l16-8 44 80-12 8ZM640 750l30-26 14 16-30 26ZM468 728l12-12 14 24-12 12ZM0 535L85 435 122 510 0 602ZM44 395l40-10 20 8-50 14ZM16 385h10v55h-10ZM150 580L180 620 170 630 150 600ZM170 550L205 532 235 600 215 620 195 610ZM205 640L230 615 275 685 250 700ZM148 670l14-10 50 90-12 8ZM268 770l34-26 20 16-44 30Z"/>
    <path class="beige" d="M0 725V705L90 636 102 655ZM5 775L130 684 158 738 40 834ZM82 584L132 550 145 572 100 600ZM110 632l25-20 10 26-18 14ZM0 845L50 930 115 893 130 910 40 965 0 900ZM255 345l15-24 10 10-16 26ZM303 448l15-8 22 45-12 4ZM350 524l12-8 14 28-10 12ZM645 1012L690 978 710 1015 665 1045ZM595 935l14-8 30 50-12 10ZM500 760l12-10 12 22-10 8ZM465 1048l5-15 48 12-10 14ZM42 352h74v10h-74ZM228 0h40v22h-40ZM1520 1030l20-16 28 45v12h-24Z"/>
    <path class="plot" d="M100 815L165 765 205 845 150 890ZM0 360h10v100H0Z"/>
    <path class="green" d="M0 174H80L135 205 120 230 100 255 0 250ZM55 1025L265 870 285 885 215 940 240 985 280 960 318 990 345 1071H70Z"/>
    <path class="beige" d="M216 940L280 905 300 938 240 985Z"/>
    <path class="park" d="M282 860L380 792 420 875 325 948ZM345 1050L362 950Q380 915 410 918 450 925 458 960L440 1071H345ZM265 990l20-40 34 40-34 22Z"/>
    <path d="M80 1025L140 1071M100 985L130 1030 250 1050 265 1071M60 1025L240 1071M255 1030V990" fill="none" stroke="#e6f7d8" stroke-width="1"/>
    <path class="tiny" d="M460 960L520 1071M480 1020L540 1050M420 810L470 930"/>
    <g id="rh"><path d="M0 330H190M204 0V140M40 1010L400 738M560 905L1060 490M1060 490Q1130 440 1160 375L1300 255 1360 210"/></g>
    <use href="#rh" class="case"/><use href="#rh" class="road"/>
    <g id="ri"><path d="M60 152H205V320M100 165L150 185 205 320"/></g>
    <use href="#ri" class="ycase w8"/><use href="#ri" class="yroad"/>
    <path class="yroad w13" d="M200 310L430 730 625 1090"/>
    <path class="ycase w1" d="M205 330L240 400 300 520 415 720M230 385L300 500 330 570 410 690"/>
    <path class="tram" d="M0 170H60Q95 175 120 220L190 350 400 738 600 1071"/>
    <path class="oroad w9" d="M-20 925L70 1085"/>
  </svg>

  <!-- south-east -->
  <svg x="1280" y="1120" width="640" height="357" viewBox="0 0 1568 1071" preserveAspectRatio="none">
    <path class="ind" d="M0 0H630L615 380 645 450 595 600 620 720 575 890 430 1000 340 1071H0ZM480 1071L710 800 860 1071ZM1195 790L1230 612 1300 640 1370 620 1480 590 1568 720V980L1510 1010 1370 950 1385 850Z"/>
    <path class="green" d="M905 264H1014V0H1230L1400 165 1420 230 1510 320 1568 350V560L1540 545 1440 465 1435 395 1370 300 1240 185 1160 138 1130 132 1090 102Q1070 100 1055 140L1028 195V308L1010 315Q940 290 905 264Z"/>
    <path class="bld" d="M10 350L70 304 74 322 22 366ZM76 290L115 264 118 275 85 290ZM22 390L45 375 68 400 50 432 35 425ZM175 392L225 366 228 380 190 410ZM245 410L440 264H590L480 350 290 480ZM500 300L535 280 570 330 545 358ZM158 498L205 430 240 415 242 438 165 510ZM208 502L250 468 285 535 245 572ZM357 490L418 440 423 456 366 502ZM472 470L555 395 588 450 510 530ZM385 570L485 512 490 535 400 590ZM534 565L605 508 612 525 545 578ZM298 555l44-32 4 10-40 30ZM595 555l55-42 8 10-50 42ZM272 625L350 560 388 620 305 684ZM425 640L500 585 530 660 455 712ZM350 710L420 655 450 730 385 785ZM262 745L305 718 355 790 305 835ZM0 560L45 640 0 680ZM0 700L65 662 108 740 0 825ZM190 670l20-18 16 150-16 10ZM235 830L260 800 355 940 325 962ZM470 800L525 750 530 770 478 810ZM508 845L550 812 556 830 515 855ZM0 905L150 845 235 1000 150 1071H0ZM380 970L440 922 450 945 395 990ZM455 920l18-16 10 18-18 16ZM490 890l18-14 6 18-16 12ZM255 1020L280 990 330 1010 370 970 380 990 290 1060ZM500 1071L740 890 835 1071ZM615 895L690 835 695 855 625 908ZM636 800l20-26 20 26-30 28ZM590 660l16-10 25 42-18 10ZM670 460l16-8 34 70-12 12ZM690 375h12v12h-12ZM695 400l10-4 10 24-10 4ZM740 580l30-20 4 12-30 18ZM655 545l12-6 26 50-14 6ZM675 640l30-26 6 12-30 22ZM1220 710L1240 630 1254 632 1235 715ZM1300 680L1312 640 1412 672 1400 710ZM1303 750L1312 727 1390 755 1380 785ZM1445 805L1465 730 1500 742 1480 815ZM1390 870L1405 820 1440 835 1430 880ZM1373 960L1390 905 1460 930 1470 870 1510 880 1490 975 1430 1000ZM1162 955L1205 930 1240 960 1230 1000 1200 1015 1170 990Z"/>
    <path class="beige" d="M1330 890l12-48 16 5-10 52Z" opacity=".6"/>
    <path class="tiny" d="M1050 370L1130 370M1040 430L1160 430M1040 480L1140 500M960 500V600M800 430L860 500M870 520L940 490M1000 530L1000 600M1060 600L1080 700M1020 620L1070 740M1130 580V620M1120 800V870M1160 730L1170 870M1200 650L1210 600M1270 840L1320 880M680 740L780 700M730 750H780M800 600L870 590M860 660H930M1230 210L1330 310M1360 280L1370 400M1220 500L1240 620M1290 300L1400 520M1460 30V90M1480 190L1500 80M1280 30H1330M1250 870L1290 870M1260 980L1270 1071M1310 990L1400 1040"/>
    <g id="rj"><path d="M340 1085L560 905 580 870 612 732 780 595M780 595Q800 565 820 562L880 556 932 608 890 700 905 712M780 595Q810 640 870 680M850 264Q880 305 930 310 990 330 1000 400L1010 460 1090 560 1178 690 1188 800 1183 910M1178 690L1205 640 1225 570H1245L1280 580Q1320 595 1330 570M1225 570Q1225 520 1245 490M1215 190L1420 440 1440 520 1510 640 1580 760M1190 258L1300 390 1435 492M1440 530L1400 600M1430 560H1465M1225 0L1400 160 1500 245 1580 290M1188 815Q1260 830 1295 880L1285 960 1260 1000 1220 1030M1105 895Q1120 915 1183 915L1290 922M1165 915L1070 1020 1010 1071M1070 1025H1100L1130 1071M1390 1071Q1395 1020 1420 1000M1485 1010L1508 1071M1505 1000L1568 975M1550 640L1568 670M1440 0H1568"/></g>
    <use href="#rj" class="case"/><use href="#rj" class="road"/>
    <path d="M1345 0L1295 60" class="ycase w8"/><path d="M1350-5L1295 60" class="yroad"/>
    <path class="rail" d="M780 264L1010 480Q1090 560 1105 680 1115 800 1080 900 1050 980 990 1020L920 1071M980 1022Q1020 1000 1080 1003 1150 1010 1200 1030L1350 1071"/>
    <path class="plot" d="M1568 800L1525 860 1535 920 1568 940Z"/>
    <path class="park" d="M1535 865l15-10 18 30v26Z"/>
  </svg>

  <g class="lbl">
    <text textLength="90"><textPath href="#lp1">квартал 953А</textPath></text>
    <text x="-3" y="869" textLength="112">й Заводской пр-д</text>
    <text x="540" y="882" textLength="128">9-й Заводской пр-д</text>
    <text transform="translate(729 1067) rotate(-90)" textLength="109">просп. Калинина</text>
    <text class="big" x="121" y="1176" textLength="167">просп. Космонавтов</text>
    <text class="mid" x="553" y="1176" textLength="148">просп. Космонавтов</text>
    <text transform="translate(289 1252) rotate(90)" textLength="105">4-я Западная ул.</text>
    <text transform="translate(191 1346) rotate(90)" textLength="109">Тимуровская ул.</text>
    <text transform="translate(266 1476) rotate(-90)" textLength="59">адная ул.</text>
    <text class="big" transform="translate(626 1447) rotate(57)">прос</text>
    <text transform="translate(479 1461) rotate(60)">1-я</text>
    <text transform="translate(690 1443) rotate(-34)" textLength="114">ул. Петра Сухова</text>
    <text class="big" transform="translate(808 1370) rotate(55)" textLength="123">просп. Калинина</text>
    <text textLength="122"><textPath href="#lp2">Бриллиантовая ул.</textPath></text>
    <text textLength="128"><textPath href="#lp3">Верхгляденская ул.</textPath></text>
    <text transform="translate(1648 1363) rotate(36)" textLength="88">ул. Пугачёва</text>
    <text textLength="98"><textPath href="#lp4">Рубцовская ул.</textPath></text>
    <text transform="translate(1895 1338) rotate(57)">ул. Ма</text>
    <text class="town" x="1902" y="1307">О</text>
  </g>
  <g class="poi">
    <text x="511" y="1042" textLength="95" class="c-blue">Формула М2</text>
    <text x="403.500" y="1113" textLength="45" class="c-blue">Алтай</text>
    <text x="316.500" y="1151" textLength="39" class="c-blue">Маяк</text>
    <text x="739" y="1199" textLength="82" class="c-pink">Отдыхалов</text>
    <text x="447" y="1312" textLength="72" class="c-violet">Роснефть</text>
    <text x="529.500" y="1357" textLength="56" class="c-violet">Пальма</text>
    <text x="404" y="1405" textLength="108" class="c-violet">Газпромнефть</text>
    <text x="61.500" y="1443" textLength="89" class="c-red">Роддом № 1</text>
    <text x="0" y="1467" class="c-red">З</text>
  </g>
  <use href="#m-cart" x="499" y="1002" width="24" height="24"/>
  <use href="#m-bag" x="391.500" y="1072" width="24" height="24"/>
  <use href="#m-cart" x="304.500" y="1111" width="24" height="24"/>
  <use href="#m-fuel" x="434" y="1272" width="24" height="24"/>
  <use href="#m-bed" x="517" y="1316" width="24" height="24"/>
  <use href="#m-fuel" x="391.500" y="1366" width="24" height="24"/>
  <g transform="translate(738.500 1171)"><circle r="12.500" fill="#f58ab9"/><path fill="#fff" d="M0-6.500Q6 0 0 6-6 0 0-6.500ZM-5.500-4Q-5 4-1 6.500-8 6-7-2ZM5.500-4Q5 4 1 6.500 8 6 7-2Z"/></g>
  <g transform="translate(61.500 1415)"><circle r="12.500" fill="#f88d8d"/><path d="M0-6V6M-6 0H6" stroke="#fff" stroke-width="3.600"/></g>
  <g transform="translate(806 1461)"><circle r="12.500" fill="#58ad1b"/><path fill="#fff" fill-rule="evenodd" d="M-6-7l2 2h8l2-2v3l2 2v3H-8v-3l2-2ZM-8 2H8v4l-3 2h-10l-3-2ZM-4 3.500V6h8V3.500ZM-4.500-3v1.500h2V-3ZM2.500-3v1.500h2V-3Z"/></g>
  <path d="M940 1075.500a15 15 0 1 0-1.800 30l-2.700 19.500Q952 1110 955 1090.500a15 15 0 0 0-15-15Z" fill="#1e98ff" stroke="#fff" stroke-width="4" paint-order="stroke"/>
  <circle cx="940" cy="1090.500" r="11" fill="#fff"/>
</svg>
<aside class="card">
  <h2>Контакты</h2>
  <h3>Офис</h3>
  <p>г.Новоалтайск, ул.Павла Корчагина, 1</p>
  <h3 class="next">Склад</h3>
  <p>г.Новоалтайск, ул.Павла Корчагина, 1</p>
</aside>
</section>

<footer class="footer">
  <div class="footer__copy">© РАМАС 2022 г. Все права защищены</div>
  <div class="place"><svg class="ico-pin"><use href="#i-pin"/></svg><span>г. Новоалтайск, ул. Павла Корчагина, 1</span></div>
  <a class="tel" href="#"><svg class="ico-phone"><use href="#i-phone"/></svg><span>8 3852 <b>717-797</b></span></a>
</footer>
</body>
</html>
```
FILE: styles.css
```css
* { box-sizing: border-box; margin: 0; padding: 0; }
body { font-family: Montserrat, Inter, "Noto Sans", sans-serif; color: #000; background: #fff; width: 1920px; }
a { color: inherit; text-decoration: none; }
.sprite { position: absolute; }

.topbar { height: 80px; display: grid; grid-template-columns: 522px 711px 1fr; padding-left: 224px; align-items: center; }
.logo svg { display: block; }
.logo__text { font: 900 30px Inter, sans-serif; fill: #141414; stroke: #141414; stroke-width: .6; }
.logo__text--accent { fill: #ec680c; stroke: #ec680c; }
.place { display: flex; align-items: center; gap: 28px; font-size: 18px; font-weight: 600; letter-spacing: .010em; color: #363638; white-space: nowrap; }
.place span { padding-top: 2px; }
.ico-pin { width: 17px; height: 21px; fill: #f86503; }
.tel { display: flex; align-items: center; gap: 24px; font-size: 24px; font-weight: 600; color: #232327; white-space: nowrap; }
.tel b { font-weight: 600; color: #f86503; }
.ico-phone { width: 26px; height: 25px; fill: #f86503; }

.menu { height: 58px; background: #f86503; color: #fff; display: grid; grid-template-columns: 141px 226px 255px 205px 202px 147px 181px auto; align-items: center; padding-left: 238px; font-size: 17px; font-weight: 600; letter-spacing: .009em; white-space: nowrap; }

.page { height: 633px; padding: 38px 0 0 251px; }
.crumbs { font-size: 14px; line-height: 20px; letter-spacing: .008em; padding-left: 4px; }
.crumbs a { color: #f98435; text-decoration: underline; }
.title { font-size: 46.5px; line-height: 60px; font-weight: 700; color: #262626; margin-top: 21px; }
.cols { display: grid; grid-template-columns: 643px 723px; margin-top: 51px; }
.info { font-size: 16px; line-height: 26px; letter-spacing: .009em; display: flex; flex-direction: column; gap: 26px; }
.info h2 { font-size: 16px; font-weight: 600; letter-spacing: .010em; }
.info__legal { margin-top: 52px; }
.form h2 { font-size: 22px; line-height: 30px; font-weight: 600; letter-spacing: .010em; }
.form__row { display: grid; grid-template-columns: 350px 350px; gap: 23px; margin-top: 30px; }
.field { display: block; height: 45px; border: 1px solid #262626; border-radius: 10px; padding: 10px 29px; font-size: 16px; line-height: 26px; color: #1c1c1c; }
.field--tel { padding-left: 25px; }
.field--area { height: 155px; margin-top: 17px; padding-top: 19px; }
.btn { display: block; margin-top: 25px; width: 220px; height: 50px; border: 0; border-radius: 10px; background: #f86503; color: #fff; font: 600 18px Montserrat, Inter, sans-serif; }

.mapwrap { position: relative; height: 706px; overflow: hidden; }
.map { display: block; width: 1920px; height: 706px; }
.map g[id] { fill: none; }
.map path, .map ellipse { vector-effect: non-scaling-stroke; }
.map .land { fill: #fbfcf5; }
.map .ind { fill: #f6f7f3; }
.map .green { fill: #d4f1bb; }
.map .park { fill: #dcedd0; }
.map .water { fill: #b8dff6; }
.map .bld { fill: #ebebeb; }
.map .flat { fill: #f2eeea; }
.map .beige { fill: #eee8df; }
.map .shop { fill: #fbf6ec; }
.map .plot { fill: #f4f4f9; }
.map .lilac { fill: #e1dfec; }
.map .tiny { fill: none; stroke: #efebe7; stroke-width: 5; stroke-dasharray: 4 6; }
.map .case { fill: none; stroke: #e6e6e6; stroke-width: 6.5; stroke-linejoin: round; }
.map .road { fill: none; stroke: #fff; stroke-width: 4.5; stroke-linejoin: round; }
.map .rail { fill: none; stroke: #b6b8b8; stroke-width: 2.4; stroke-dasharray: 6 2; }
.map .tram { fill: none; stroke: #dd9393; stroke-width: 1.3; }
.map .ycase { fill: none; stroke: #ffdf9a; stroke-width: 8; stroke-linejoin: round; }
.map .yroad { fill: none; stroke: #fff0b0; stroke-width: 5.5; stroke-linejoin: round; }
.map .oroad { fill: none; stroke: #ffdf8e; stroke-width: 8; }
.map .w1 { stroke-width: 1; }
.map .w8 { stroke-width: 8; }
.map .w9 { stroke-width: 8.5; }
.map .w10 { stroke-width: 11.5; }
.map .w13 { stroke-width: 13; }
.lbl { font: 500 14px "Open Sans", "Noto Sans", sans-serif; fill: #4f5356; stroke: #fff; stroke-width: 2.5px; paint-order: stroke; }
.lbl .mid { font-size: 15.5px; }
.lbl .big { font-size: 16.5px; }
.lbl .town { font-size: 22px; font-weight: 600; fill: #a8b4bd; }
.poi { font: 600 14.5px "Open Sans", "Noto Sans", sans-serif; text-anchor: middle; stroke: #fff; stroke-width: 2.5px; paint-order: stroke; }
.c-blue { fill: #569fe8; }
.c-pink { fill: #e67bac; }
.c-violet { fill: #9380e8; }
.c-red { fill: #ec8080; }

/* floating card over the map */
.card { position: absolute; left: 1190px; top: 165px; width: 504px; height: 272px; padding: 42px 66px; background: #fff; border-radius: 30px; box-shadow: 0 4px 40px rgba(0, 0, 0, .22); }
.card h2 { font-size: 24px; line-height: 30px; font-weight: 700; letter-spacing: .008em; color: #f86503; margin-bottom: 25px; }
.card h3 { font-size: 18px; line-height: 25px; font-weight: 700; letter-spacing: .010em; }
.card .next { margin-top: 25px; }
.card p { font-size: 18px; line-height: 25px; font-weight: 500; letter-spacing: .009em; white-space: nowrap; }

.footer { height: 122px; background: #272727; color: #fff; display: grid; grid-template-columns: 532px 611px 1fr; padding-left: 212px; align-items: center; }
.footer__copy { font-size: 18px; font-weight: 700; letter-spacing: .009em; }
.footer .place, .footer .tel { color: #fff; }
```
